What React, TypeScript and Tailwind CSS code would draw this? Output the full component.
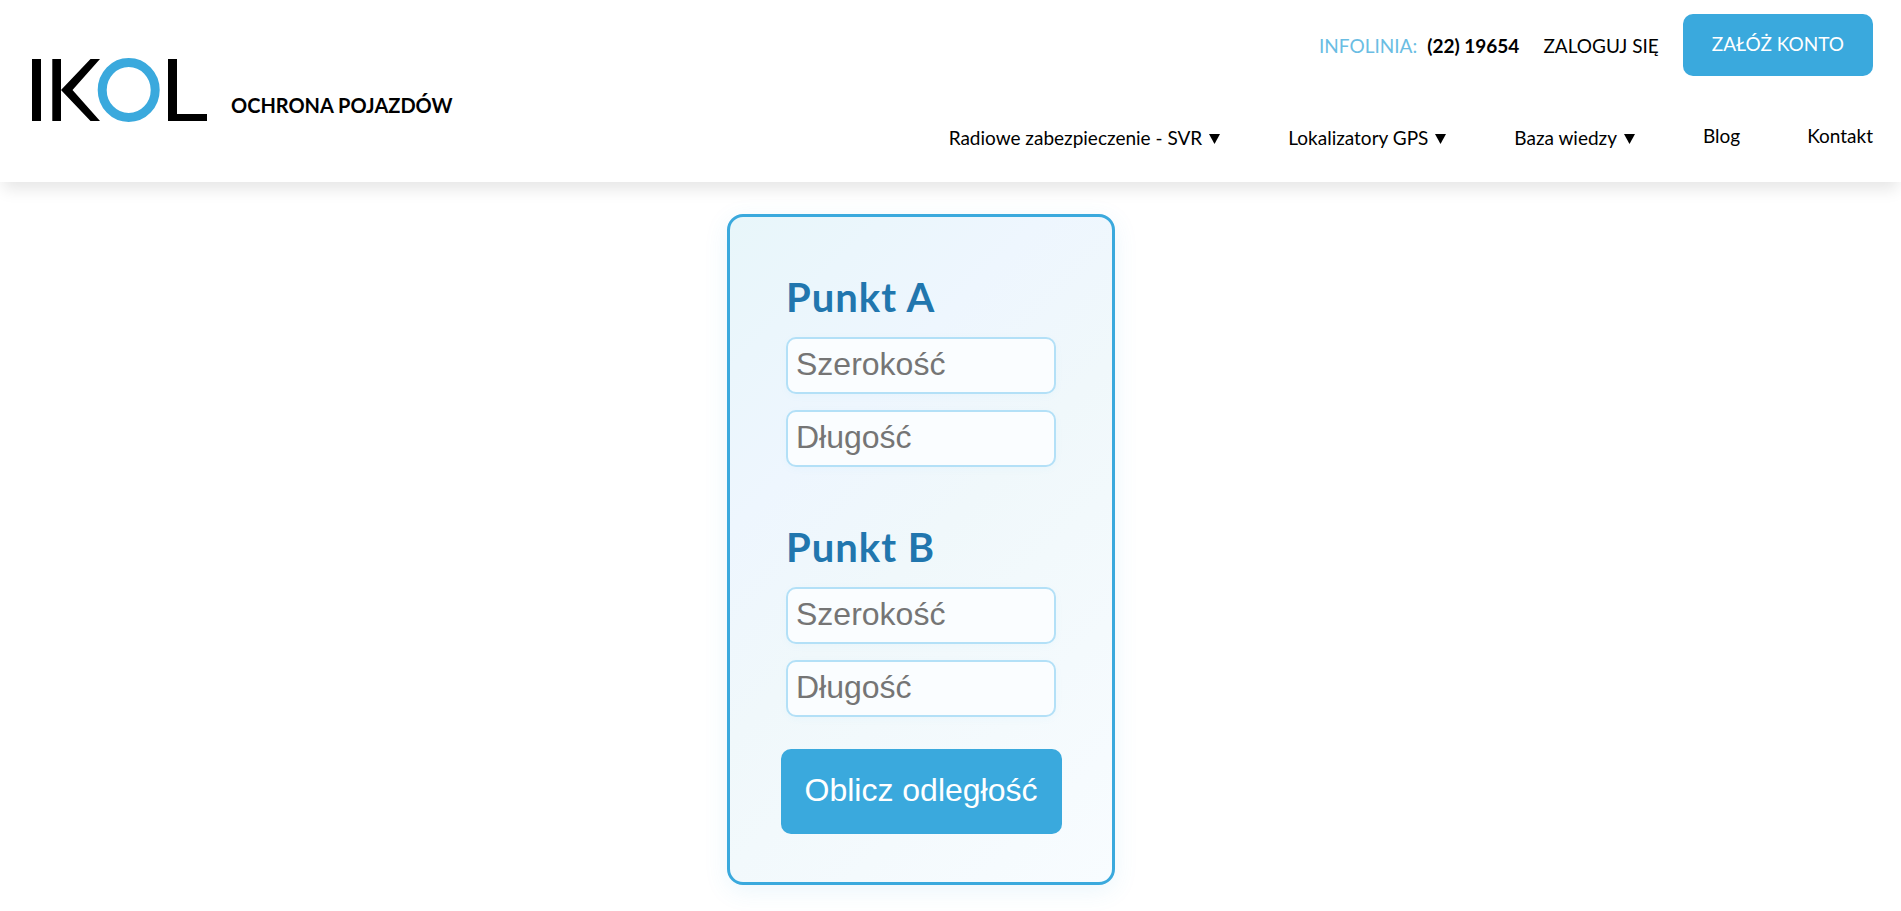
import React from "react";

const menu = [
  { label: "Radiowe zabezpieczenie - SVR", dropdown: true },
  { label: "Lokalizatory GPS", dropdown: true },
  { label: "Baza wiedzy", dropdown: true },
  { label: "Blog", dropdown: false },
  { label: "Kontakt", dropdown: false },
];

function Logo() {
  return (
    <svg viewBox="0 0 175 64" className="h-16 w-[175px]" role="img" aria-label="IKOL">
      <path d="M0 1h9v62H0zM20.300 1h8.700v62h-8.700zM136 1h9v55h30v7h-39z" fill="#000" />
      <path d="M58.500 1h9.500L40.500 32 68 63h-9.500L29 32z" fill="#000" />
      <ellipse cx="96.700" cy="32" rx="26.500" ry="27.500" fill="none" stroke="#3aa9dd" strokeWidth="9" />
    </svg>
  );
}

function Header() {
  return (
    <header className="flex h-[182px] justify-between bg-white pr-7 pl-8 shadow-[0_10px_15px_-3px_rgba(0,0,0,0.1)]">
      <a href="#" className="mt-[58px] flex items-start gap-6">
        <Logo />
        <span className="mt-[34px] text-xl leading-[26px] font-bold">OCHRONA POJAZDÓW</span>
      </a>
      <div className="flex flex-col items-end text-[19px] leading-6">
        <div className="mt-[14px] flex items-center gap-6">
          <p className="pt-[2px]">
            <span className="mr-[10px] text-[#6abde3]">INFOLINIA:</span>
            <a href="tel:2219654" className="font-bold">(22) 19654</a>
          </p>
          <a href="#" className="pt-[2px]">ZALOGUJ SIĘ</a>
          <a
            href="#"
            className="flex h-[62px] items-center rounded-[10px] bg-[#3aa9dd] px-[29px] pb-[2px] text-white"
          >
            ZAŁÓŻ KONTO
          </a>
        </div>
        <nav className="mt-12">
          <ul className="flex items-start gap-[67px]">
            {menu.map((item) => (
              <li key={item.label}>
                <a href="#" className={item.dropdown ? "flex items-center gap-[7px] pt-[2px]" : "block"}>
                  {item.label}
                  {item.dropdown && (
                    <svg viewBox="0 0 12 10" className="mt-[2px] h-[10px] w-3" aria-hidden="true">
                      <path d="M0 0h11L5.500 10z" />
                    </svg>
                  )}
                </a>
              </li>
            ))}
          </ul>
        </nav>
      </div>
    </header>
  );
}

function Field({ id, label }: { id: string; label: string }) {
  return (
    <input
      id={id}
      type="text"
      aria-label={label}
      placeholder={label}
      className="h-[57px] w-full rounded-[10px] border-2 border-[#b3e0f7] bg-[#fafdff] px-2 pb-[2px] font-['Liberation_Sans',sans-serif] text-[32px] shadow-[0_2px_8px_rgba(58,169,221,0.04)] placeholder:text-[#757575] placeholder:opacity-100"
    />
  );
}

function Point({ name }: { name: string }) {
  return (
    <fieldset className="w-[270px]">
      <legend className="mb-4 text-[40px] leading-12 font-bold tracking-wide text-[#2176ae]">
        Punkt {name}
      </legend>
      <div className="flex flex-col gap-4">
        <Field id={`lat-${name}`} label="Szerokość" />
        <Field id={`lng-${name}`} label="Długość" />
      </div>
    </fieldset>
  );
}

export default function App() {
  return (
    <div className="min-h-screen bg-white font-[Lato,sans-serif] text-black">
      <Header />
      <main className="flex justify-center pt-8 pr-[59px] pb-6">
        <form
          onSubmit={(e) => e.preventDefault()}
          className="flex w-[388px] flex-col items-center rounded-2xl border-[3px] border-[#3aa9dd] bg-linear-[135deg,#e8f6fa_0%,#eef6fe_30%,#f0f8fb_50%,#f8fcff_100%] pt-14 pb-12 shadow-[0_6px_24px_rgba(58,169,221,0.1)]"
        >
          <Point name="A" />
          <div className="mt-14">
            <Point name="B" />
          </div>
          <button
            type="submit"
            className="mt-8 h-[85px] rounded-[10px] bg-[#3aa9dd] px-6 pb-1 font-['Liberation_Sans',sans-serif] text-[32px] text-white"
          >
            Oblicz odległość
          </button>
        </form>
      </main>
    </div>
  );
}
